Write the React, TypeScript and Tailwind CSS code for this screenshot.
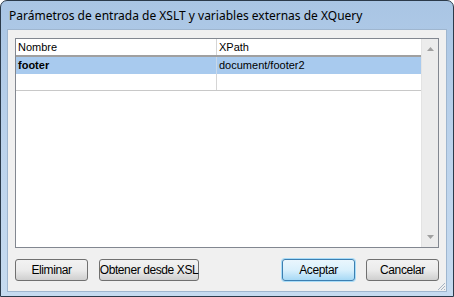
import React from 'react';

const ui = { fontFamily: '"Liberation Sans", Arial, sans-serif' };
const narrow = { fontFamily: '"Liberation Sans", Arial, sans-serif' };

function Btn({ label, w, primary }: { label: string; w: string; primary?: boolean }) {
  return (
    <button
      style={narrow}
      className={
        `${w} h-[22px] rounded-[3px] border text-[12px] tracking-[-0.4px] whitespace-nowrap text-black leading-none flex items-center justify-center ` +
        (primary
          ? 'border-[#3c7fb1] bg-gradient-to-b from-[#eaf6fd] via-[#d9f0fc] to-[#a7d9f5] shadow-[0_0_0_1px_#a8dcf8]'
          : 'border-[#707070] bg-gradient-to-b from-[#f2f2f2] via-[#ebebeb] to-[#cfcfcf]')
      }
    >
      {label}
    </button>
  );
}

export default function App() {
  return (
    <div className="w-[454px] h-[297px] bg-white">
      <div className="w-full h-full flex flex-col rounded-t-[7px] border border-[#2b3a4a] bg-gradient-to-b from-[#a9c5e4] via-[#bcd3ec] to-[#c6dbf0]">
        {/* title bar */}
        <div className="h-[28px] flex items-center px-[8px] pt-[2px]">
          <span style={{ fontFamily: '"Noto Sans", "Open Sans", sans-serif' }} className="text-[12px] text-black">
            Parámetros de entrada de XSLT y variables externas de XQuery
          </span>
        </div>

        {/* client */}
        <div className="flex-1 mx-[6px] mb-[4px] border border-[#9fb6cf] bg-[#f0f0f0] flex flex-col px-[7px] pt-[8px] relative">
          {/* list */}
          <div className="h-[210px] border border-[#828790] bg-white flex" style={ui}>
            <div className="flex-1 flex flex-col text-[11px] text-black">
              <div className="h-[18px] flex border-b-[2px] border-[#a0a0a0]">
                <div className="w-[201px] border-r border-[#d5d5d5] pl-[2px] flex items-center">Nombre</div>
                <div className="flex-1 pl-[2px] flex items-center">XPath</div>
              </div>
              <div className="h-[17px] flex bg-[#a8caee]">
                <div className="w-[201px] border-r border-[#c8d8ea] pl-[2px] flex items-center font-bold">footer</div>
                <div className="flex-1 pl-[2px] flex items-center">document/footer2</div>
              </div>
              <div className="h-[17px] flex border-b border-[#c8c8c8]">
                <div className="w-[201px] border-r border-[#d5d5d5]" />
                <div className="flex-1" />
              </div>
            </div>
            {/* scrollbar */}
            <div className="w-[17px] bg-[#ececec] border-l border-[#e3e3e3] flex flex-col items-center justify-between py-[8px]">
              <svg width="7" height="4" viewBox="0 0 7 4">
                <path d="M0 4 L3.5 0 L7 4 Z" fill="#a0a0a0" />
              </svg>
              <svg width="7" height="4" viewBox="0 0 7 4">
                <path d="M0 0 L3.5 4 L7 0 Z" fill="#a0a0a0" />
              </svg>
            </div>
          </div>

          {/* buttons */}
          <div className="mt-[11px] flex items-center">
            <Btn label="Eliminar" w="w-[73px]" />
            <div className="w-[11px]" />
            <Btn label="Obtener desde XSL" w="w-[100px]" />
            <div className="flex-1" />
            <Btn label="Aceptar" w="w-[73px]" primary />
            <div className="w-[11px]" />
            <Btn label="Cancelar" w="w-[73px]" />
          </div>

          {/* resize grip */}
          <svg className="absolute right-[0px] bottom-[0px]" width="10" height="10" viewBox="0 0 10 10">
            <path d="M9 2 L2 9 M9 5 L5 9 M9 8 L8 9" stroke="#a7b4c2" strokeWidth="1" />
          </svg>
        </div>
      </div>
    </div>
  );
}
